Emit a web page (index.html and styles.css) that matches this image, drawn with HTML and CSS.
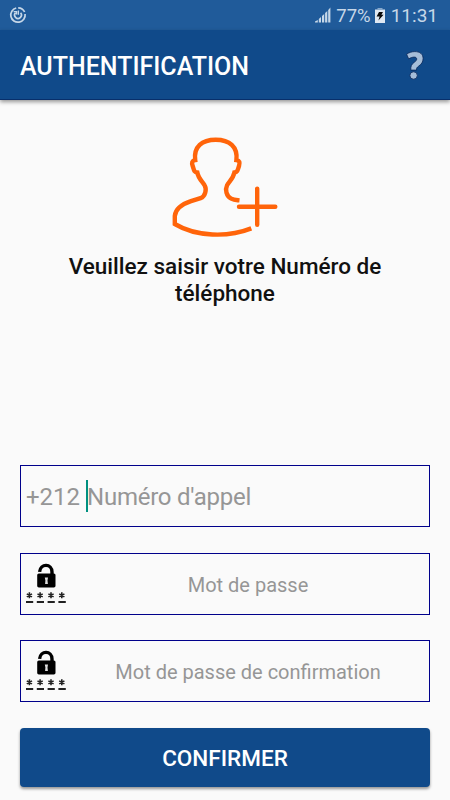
FILE: index.html
```html
<!DOCTYPE html>
<html lang="fr">
<head>
  <meta charset="UTF-8">
  <meta name="viewport" content="width=device-width, initial-scale=1.0">
  <title>Authentification</title>
  <link rel="stylesheet" href="styles.css">
</head>
<body>
  <div class="status-bar">
    <svg class="status-app" width="18" height="18" viewBox="0 0 18 18" fill="none" stroke="#c6d7e8">
      <path d="M7.2 2A7.2 7.2 0 1 0 16.1 8M9.2 1.8A7.2 7.2 0 0 1 15.6 6" stroke-width="1.7"/>
      <path d="M6.6 6.6A3.4 3.4 0 1 0 11.6 6.8" stroke-width="1.6"/>
      <path d="M4.6 5.6h3v3M9.4 4.6v4.2" stroke-width="1.3"/>
    </svg>
    <div class="status-right">
      <svg class="signal" width="16" height="16" viewBox="0 0 16 16" fill="#c6d7e8">
        <path d="M0 15.5v-1L2.8 13v2.5zM3.8 12l2.2-2v5.5H3.8zM7 9l2.2-2v8.5H7zM10.1 6L12.3 4v11.5h-2.2zM13.2 3L15.4.6v14.9h-2.2z"/>
      </svg>
      <span class="percent">77%</span>
      <svg class="battery" width="10" height="15" viewBox="0 0 10 15">
        <path d="M0 1.5h10V15H0z" fill="#dfe8f2"/>
        <path d="M2.5 0h5v2h-5z" fill="#86a8cc"/>
        <path d="M4 4h4L6.4 6.8H8.6L3.4 12.6 4.6 8.6H1.6z" fill="#0a0a0a"/>
      </svg>
      <span class="clock">11:31</span>
    </div>
  </div>

  <header class="app-bar">
    <h1>AUTHENTIFICATION</h1>
    <svg class="help" width="18" height="30" viewBox="0 0 18 30">
      <path d="M.6 3.2C3.2 1.4 6 .6 8.8.6c5.2 0 8.3 2.6 8.3 7 0 3.4-1.6 5.5-4.4 7.5-1.9 1.4-2.2 2-2.2 4H4.8c-.2-4 .7-5.8 3.3-7.7 1.9-1.4 2.6-2.1 2.6-3.3 0-1.3-.9-2-2.6-2-1.8 0-3.6.8-5.4 1.8z" fill="#a6bdd8" stroke="#0a2658" stroke-width=".8"/>
      <circle cx="7.6" cy="24.5" r="3.7" fill="#a6bdd8" stroke="#0a2658" stroke-width=".8"/>
    </svg>
  </header>

  <main class="content">
    <svg class="user-plus" width="130" height="125" viewBox="0 0 130 125" fill="none" stroke="#ff640a" stroke-width="4.4">
      <path d="M91.3 103.4C68 112.6 36 111.8 14.8 99V91C15.5 84 22 79.2 31 76.2L40.5 73.2C45.5 71 46.8 64.5 44.7 60.5C43 57 38.4 53.8 37.3 47.5C34 47.3 34 45 32.7 41C31.5 37.5 32 35.6 35.2 35.1C33.5 21.5 42 14.7 55.7 14.7S78 21.5 76.4 35.1C79.6 35.6 80.1 37.5 79 41C77.8 45 77.5 47.3 74.4 47.5C73.2 53.8 68.5 57 67 60.5C65 64.5 66.2 71 71.2 73.6C74 75 76 75 79.5 75.4"/>
      <path d="M79 81.7h36.3M97.2 63.6v36.2" stroke-linecap="round"/>
    </svg>
    <p class="instruction">Veuillez saisir votre Numéro de téléphone</p>

    <form class="auth-form">
      <label class="field phone">
        <span class="prefix">+212</span>
        <span class="caret"></span>
        <input type="tel" placeholder="Numéro d'appel">
      </label>
      <label class="field password">
        <svg class="lock" width="42" height="42" viewBox="0 0 42 42">
          <path d="M13.6 8.8C14.4 0 26 .4 26 9V13" fill="none" stroke="#000" stroke-width="3.4"/>
          <rect x="11.2" y="10.4" width="18.3" height="14" rx="1.6"/>
          <path d="M18.8 14.6h3.2l-.5 3 .4 3.4h-2.8l.3-3.4z" fill="#ddd"/>
          <path d="M3.4 29.3v6M.8 30.9l5.2 3M6 30.9l-5.2 3M14.1 29.3v6M11.5 30.9l5.2 3M16.7 30.9l-5.2 3M25 29.3v6M22.4 30.9l5.2 3M27.6 30.9l-5.2 3M35.8 29.3v6M33.2 30.9l5.2 3M38.4 30.9l-5.2 3" stroke="#222" stroke-width="1.6"/>
          <path d="M0 39h7.2M10.8 39H18M21.6 39h7.2M32.4 39h7.4" stroke="#222" stroke-width="2"/>
        </svg>
        <input type="password" placeholder="Mot de passe">
      </label>
      <label class="field password">
        <svg class="lock" width="42" height="42" viewBox="0 0 42 42">
          <path d="M13.6 8.8C14.4 0 26 .4 26 9V13" fill="none" stroke="#000" stroke-width="3.4"/>
          <rect x="11.2" y="10.4" width="18.3" height="14" rx="1.6"/>
          <path d="M18.8 14.6h3.2l-.5 3 .4 3.4h-2.8l.3-3.4z" fill="#ddd"/>
          <path d="M3.4 29.3v6M.8 30.9l5.2 3M6 30.9l-5.2 3M14.1 29.3v6M11.5 30.9l5.2 3M16.7 30.9l-5.2 3M25 29.3v6M22.4 30.9l5.2 3M27.6 30.9l-5.2 3M35.8 29.3v6M33.2 30.9l5.2 3M38.4 30.9l-5.2 3" stroke="#222" stroke-width="1.6"/>
          <path d="M0 39h7.2M10.8 39H18M21.6 39h7.2M32.4 39h7.4" stroke="#222" stroke-width="2"/>
        </svg>
        <input type="password" placeholder="Mot de passe de confirmation">
      </label>
      <button class="confirm" type="button">CONFIRMER</button>
    </form>
  </main>
</body>
</html>
```
FILE: styles.css
```css
* {
  box-sizing: border-box;
}
body {
  margin: 0;
  height: 800px;
  overflow: hidden;
  font-family: Roboto, "Liberation Sans", sans-serif;
  background-color: #fafafa;
  color: #111;
}
.status-bar {
  display: flex;
  justify-content: space-between;
  align-items: center;
  height: 30px;
  padding: 0 12px 0 9px;
  background-color: #205b9a;
  color: #c6d7e8;
  line-height: 30px;
}
.status-right {
  display: flex;
  align-items: center;
}
.percent {
  margin: 2px 4px 0 5px;
  font-size: 18.5px;
}
.clock {
  margin: 2px 0 0 6px;
  font-size: 19px;
}
/* App bar */
.app-bar {
  display: flex;
  justify-content: space-between;
  align-items: center;
  height: 70px;
  padding: 4px 26px 0 20px;
  background-color: #104a8a;
  border-bottom: 1px solid #082f6b;
  box-shadow: 0 2px 4px rgba(0, 0, 0, 0.4);
}
.app-bar h1 {
  margin: 0;
  font-size: 25px;
  font-weight: 500;
  color: #fff;
}
.help {
  margin-bottom: 2px;
  overflow: visible;
}
.content {
  display: flex;
  flex-direction: column;
  padding: 25px 20px 0;
}
.user-plus {
  margin-left: 140px;
}
.instruction {
  width: 330px;
  height: 53px;
  margin: 3px auto 0;
  font-size: 22.5px;
  font-weight: 500;
  line-height: 26.5px;
  text-align: center;
}
/* Form */
.auth-form {
  display: flex;
  flex-direction: column;
  gap: 25.5px;
  margin-top: 159px;
}
.field {
  display: flex;
  align-items: center;
  height: 62px;
  padding: 0 5px;
  border: 1px solid #00008b;
}
.field input {
  flex: 1;
  min-width: 0;
  padding: 2px 0 0;
  border: none;
  outline: none;
  background: none;
  font: inherit;
}
.field input::placeholder {
  color: #969696;
  opacity: 1;
}
.phone {
  font-size: 24px;
}
.phone input {
  margin-left: -1px;
  letter-spacing: -0.25px;
}
.prefix {
  padding-top: 2px;
  color: #969696;
}
.caret {
  width: 2px;
  height: 32px;
  margin-left: 6px;
  background-color: #009080;
}
.password {
  padding-right: 1px;
  font-size: 20px;
}
.password input {
  text-align: center;
}
.confirm {
  height: 59px;
  padding: 2px 0 0;
  border: none;
  border-radius: 4px;
  background-color: #104a8a;
  box-shadow: 0 2px 3px rgba(0, 0, 0, 0.4);
  color: #fff;
  font-family: inherit;
  font-size: 22.5px;
  font-weight: 500;
}
```
